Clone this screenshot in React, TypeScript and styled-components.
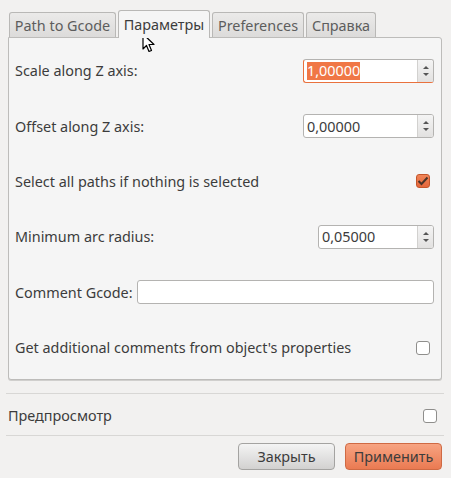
import styled, { createGlobalStyle, css } from "styled-components";

const GlobalStyle = createGlobalStyle`
  html, body {
    margin: 0;
    padding: 0;
    background: #f2f1f0;
  }
  body {
    font-family: "Noto Sans", "DejaVu Sans", sans-serif;
    font-size: 14.4px;
    color: #3c3c3c;
  }
`;

const Window = styled.div`
  position: relative;
  width: 451px;
  height: 478px;
  box-sizing: border-box;
  padding: 10px 9px 0 8px;
`;

const TabBar = styled.div`
  display: flex;
  align-items: flex-end;
  gap: 2px;
  padding-left: 1px;
  height: 27px;
`;

const Tab = styled.div<{ $active?: boolean; $width: number }>`
  display: flex;
  align-items: center;
  justify-content: center;
  box-sizing: border-box;
  width: ${(p) => p.$width}px;
  height: 25px;
  border: 1px solid #b9b8b6;
  border-bottom: none;
  border-radius: 3px 3px 0 0;
  background: linear-gradient(#ebeae9, #dcdbda);
  color: #5d5d5d;
  font-size: 14.4px;
  white-space: nowrap;
  ${(p) =>
    p.$active &&
    css`
      height: 28px;
      margin-bottom: -1px;
      background: #f5f5f5;
      color: #3c3c3c;
      position: relative;
      z-index: 1;
    `}
`;

const Panel = styled.div`
  box-sizing: border-box;
  height: 343px;
  border: 1px solid #bdbcba;
  border-radius: 0 3px 3px 3px;
  background: #f5f5f5;
  box-shadow: 0 1px 0 #d0cfcd;
  padding: 5px 7px 0 6px;
`;

const Row = styled.div`
  display: flex;
  align-items: center;
  justify-content: space-between;
  height: 55.4px;
  gap: 4px;
`;

const Label = styled.span`
  white-space: nowrap;
`;

const Field = styled.div<{ $width: number; $focus?: boolean }>`
  display: flex;
  box-sizing: border-box;
  width: ${(p) => p.$width}px;
  height: 24px;
  border: 1px solid #b4b3b1;
  border-radius: 3px;
  background: #fff;
  overflow: hidden;
  ${(p) =>
    p.$focus &&
    css`
      border-left-color: #e9713d;
      border-bottom-color: #e9713d;
    `}
`;

const Value = styled.div`
  flex: 1;
  display: flex;
  align-items: center;
  padding-left: 3px;
  font-size: 14.4px;
  color: #3c3c3c;
`;

const Selected = styled.span`
  background: #f07746;
  color: #fff;
  line-height: 18px;
`;

const SpinButtons = styled.div`
  width: 15px;
  display: flex;
  flex-direction: column;
  align-items: center;
  justify-content: center;
  gap: 4px;
  border-left: 1px solid #d2d1cf;
  background: linear-gradient(#f4f4f4, #e2e1e0);
`;

const Arrow = styled.div<{ $down?: boolean }>`
  width: 0;
  height: 0;
  border-left: 3px solid transparent;
  border-right: 3px solid transparent;
  ${(p) =>
    p.$down
      ? css`border-top: 3px solid #555;`
      : css`border-bottom: 3px solid #555;`}
`;

const TextInput = styled.div`
  flex: 1;
  box-sizing: border-box;
  height: 24px;
  border: 1px solid #b4b3b1;
  border-radius: 3px;
  background: #fff;
`;

const Check = styled.div<{ $checked?: boolean }>`
  box-sizing: border-box;
  width: 14px;
  height: 14px;
  border-radius: 3px;
  border: 1px solid #8f8e8c;
  background: #fff;
  margin-right: 4px;
  display: flex;
  align-items: center;
  justify-content: center;
  ${(p) =>
    p.$checked &&
    css`
      border-color: #c4552a;
      background: linear-gradient(#f08558, #e4663a);
    `}
`;

const Gap = styled.div`
  height: 13px;
`;

const Separator = styled.div`
  height: 1px;
  background: #d8d7d5;
  margin: 0 -2px;
`;

const PreviewRow = styled.div`
  display: flex;
  align-items: center;
  justify-content: space-between;
  height: 41px;
  padding-top: 2px;
  box-sizing: border-box;
  padding-right: 1px;
`;

const Footer = styled.div`
  display: flex;
  justify-content: flex-end;
  gap: 10px;
  padding-top: 7px;
`;

const Button = styled.button<{ $primary?: boolean }>`
  box-sizing: border-box;
  height: 27px;
  width: 97px;
  border-radius: 4px;
  border: 1px solid #a4a3a1;
  background: linear-gradient(#f4f4f4, #d2d1d0);
  font-family: inherit;
  font-size: 14.4px;
  color: #3c3c3c;
  padding: 0;
  ${(p) =>
    p.$primary &&
    css`
      border-color: #cf6a44;
      background: linear-gradient(#f7a482, #ea7a52);
    `}
`;

const Cursor = styled.svg`
  position: absolute;
  left: 142px;
  top: 33px;
`;

function SpinBox({ value, width, focus }: { value: string; width: number; focus?: boolean }) {
  return (
    <Field $width={width} $focus={focus}>
      <Value>{focus ? <Selected>{value}</Selected> : value}</Value>
      <SpinButtons>
        <Arrow />
        <Arrow $down />
      </SpinButtons>
    </Field>
  );
}

function CheckBox({ checked }: { checked?: boolean }) {
  return (
    <Check $checked={checked}>
      {checked && (
        <svg width="12" height="10" viewBox="0 0 12 10">
          <path d="M1.5 5 L4.5 8 L10.5 1.5" fill="none" stroke="#4a3328" strokeWidth="2" />
        </svg>
      )}
    </Check>
  );
}

export default function App() {
  return (
    <>
      <GlobalStyle />
      <Window>
        <TabBar>
          <Tab $width={107}>Path to Gcode</Tab>
          <Tab $width={92} $active>Параметры</Tab>
          <Tab $width={92}>Preferences</Tab>
          <Tab $width={70}>Справка</Tab>
        </TabBar>
        <Panel>
          <Row>
            <Label>Scale along Z axis:</Label>
            <SpinBox value="1,00000" width={131} focus />
          </Row>
          <Row>
            <Label>Offset along Z axis:</Label>
            <SpinBox value="0,00000" width={131} />
          </Row>
          <Row>
            <Label>Select all paths if nothing is selected</Label>
            <CheckBox checked />
          </Row>
          <Row>
            <Label>Minimum arc radius:</Label>
            <SpinBox value="0,05000" width={116} />
          </Row>
          <Row>
            <Label>Comment Gcode:</Label>
            <TextInput />
          </Row>
          <Row>
            <Label>Get additional comments from object's properties</Label>
            <CheckBox />
          </Row>
        </Panel>
        <Gap />
        <Separator />
        <PreviewRow>
          <Label>Предпросмотр</Label>
          <CheckBox />
        </PreviewRow>
        <Separator />
        <Footer>
          <Button>Закрыть</Button>
          <Button $primary>Применить</Button>
        </Footer>
        <Cursor width="14" height="20" viewBox="0 0 14 20">
          <path d="M1 1 L1 16 L4.5 12.5 L7 18.5 L9.5 17.5 L7 11.5 L12 11.5 Z" fill="#fff" stroke="#000" strokeWidth="1.2" strokeLinejoin="round" />
        </Cursor>
      </Window>
    </>
  );
}
